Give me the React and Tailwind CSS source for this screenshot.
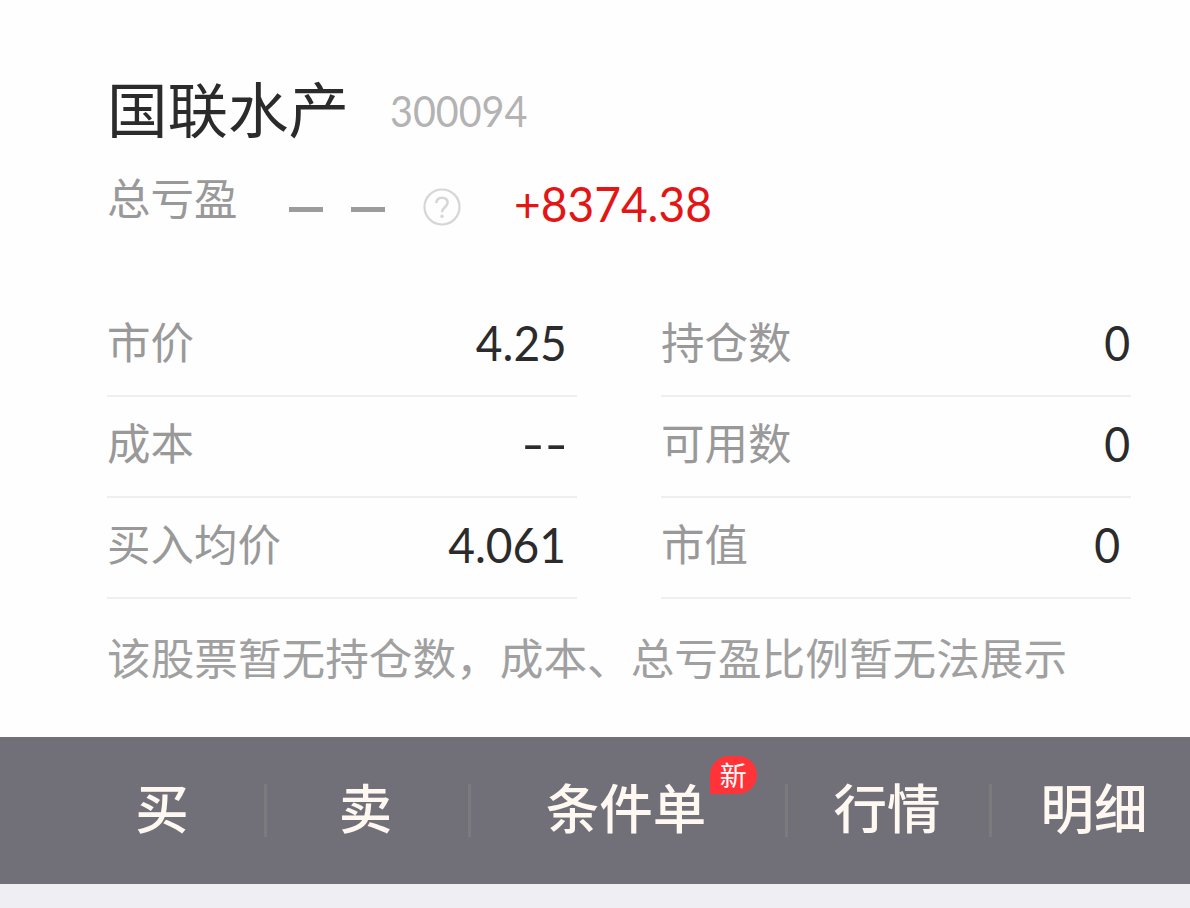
import React from "react";

const leftRows = [
	{ label: "市价", value: "4.25", tailwind: "scale-x-95 mr-[10px]" },
	{ label: "成本", value: "--", tailwind: "scale-x-130 mr-[9px]" },
	{ label: "买入均价", value: "4.061", tailwind: "scale-x-95 mr-[11px]" },
];

const rightRows = [
	{ label: "持仓数", value: "0", tailwind: "scale-x-92 mr-[1px]" },
	{ label: "可用数", value: "0", tailwind: "scale-x-92 mr-[1px]" },
	{ label: "市值", value: "0", tailwind: "scale-x-92 mr-[11px]" },
];

const actions = [
	{ label: "买", width: "w-[207px]" },
	{ label: "卖", width: "w-[204px] pr-[4px]" },
	{ label: "条件单", width: "w-[317px] pr-[4px]", badge: "新" },
	{ label: "行情", width: "w-[204px] pr-[3px]" },
	{ label: "明细", width: "w-[204px]" },
];

const Row = ({ label, value, tailwind }) => (
	<div className="h-[101px] pb-[6px] flex items-center justify-between border-b-2 border-[#efefef]">
		<span className="mb-[4px] text-[43.5px] leading-none text-[#999999]">{label}</span>
		<span className={`origin-right font-[Lato,sans-serif] text-[48.5px] leading-none text-[#2b2b2b] ${tailwind}`}>{value}</span>
	</div>
);

const Action = ({ label, width, badge, last }) => (
	<button className={`${width} shrink-0 h-[53px] flex items-center justify-center ${last ? "" : "border-r-[3px] border-[#7b7a7c]"}`}>
		<span className="relative mb-[9px] text-[53.5px] leading-none font-medium text-[#fff8f1]">
			{label}
			{badge && (
				<span className="absolute left-[164px] -top-[23px] w-[47px] h-[38px] flex items-center justify-center rounded-[19px] rounded-bl-none bg-[#ff3338] text-[27px] leading-none font-normal text-white"><span className="-mt-[2px]">{badge}</span></span>
			)}
		</span>
	</button>
);

const HelpIcon = () => (
	<svg className="size-[38px]" viewBox="0 0 38 38" fill="none" stroke="#d6d6d6">
		<circle cx="19" cy="19" r="17.5" strokeWidth="2.2" />
		<path d="M13.3 15c.2-3.3 2.4-5.3 5.7-5.3s5.6 2 5.6 4.900c0 2.200-1.200 3.400-2.900 4.800-1.900 1.500-2.700 2.300-2.700 4.800" strokeWidth="2.6" />
		<circle cx="19" cy="28.2" r="1.7" fill="#d6d6d6" stroke="none" />
	</svg>
);

const App = () => (
	<div className="w-[1190px] h-[908px] overflow-hidden flex flex-col bg-[#efeef3] font-['Noto_Sans_CJK_SC',sans-serif]">
		<div className="h-[737px] shrink-0 pl-[107px] pr-[59px] pt-[80px] bg-[#fefefe]">
			<div className="h-[60px] flex items-center">
				<h1 className="mb-[6px] text-[60.5px] leading-none text-[#2b2b2b]">国联水产</h1>
				<span className="ml-[41px] mt-[1px] origin-left scale-x-94 font-[Lato,sans-serif] text-[42px] leading-none text-[#b3b3b3]">300094</span>
			</div>
			<div className="mt-[37px] h-[56px] flex items-center">
				<span className="text-[43.5px] leading-none text-[#999999] mb-[17px]">总亏盈</span>
				<span className="ml-[51px] mt-[8px] flex gap-[28px]">
					<span className="w-[34px] h-[5px] bg-[#9c9c9c]"></span>
					<span className="w-[34px] h-[5px] bg-[#9c9c9c]"></span>
				</span>
				<span className="ml-[38px] mt-[4px]"><HelpIcon /></span>
				<span className="ml-[53px] mb-[4px] origin-left scale-x-95 font-[Lato,sans-serif] text-[48.5px] leading-none text-[#e31515]">+8374.38</span>
			</div>
			<div className="mt-[63px] flex gap-[84px]">
				<div className="w-[470px]">
					{leftRows.map((row) => <Row key={row.label} {...row} />)}
				</div>
				<div className="w-[470px]">
					{rightRows.map((row) => <Row key={row.label} {...row} />)}
				</div>
			</div>
			<p className="mt-[36px] text-[43.65px] leading-none whitespace-nowrap text-[#a0a0a0]">该股票暂无持仓数，成本、总亏盈比例暂无法展示</p>
		</div>
		<nav className="h-[147px] shrink-0 pl-[60px] flex items-center bg-[#716f78]">
			{actions.map((action, i) => <Action key={action.label} {...action} last={i === actions.length - 1} />)}
		</nav>
	</div>
);

export default App;
